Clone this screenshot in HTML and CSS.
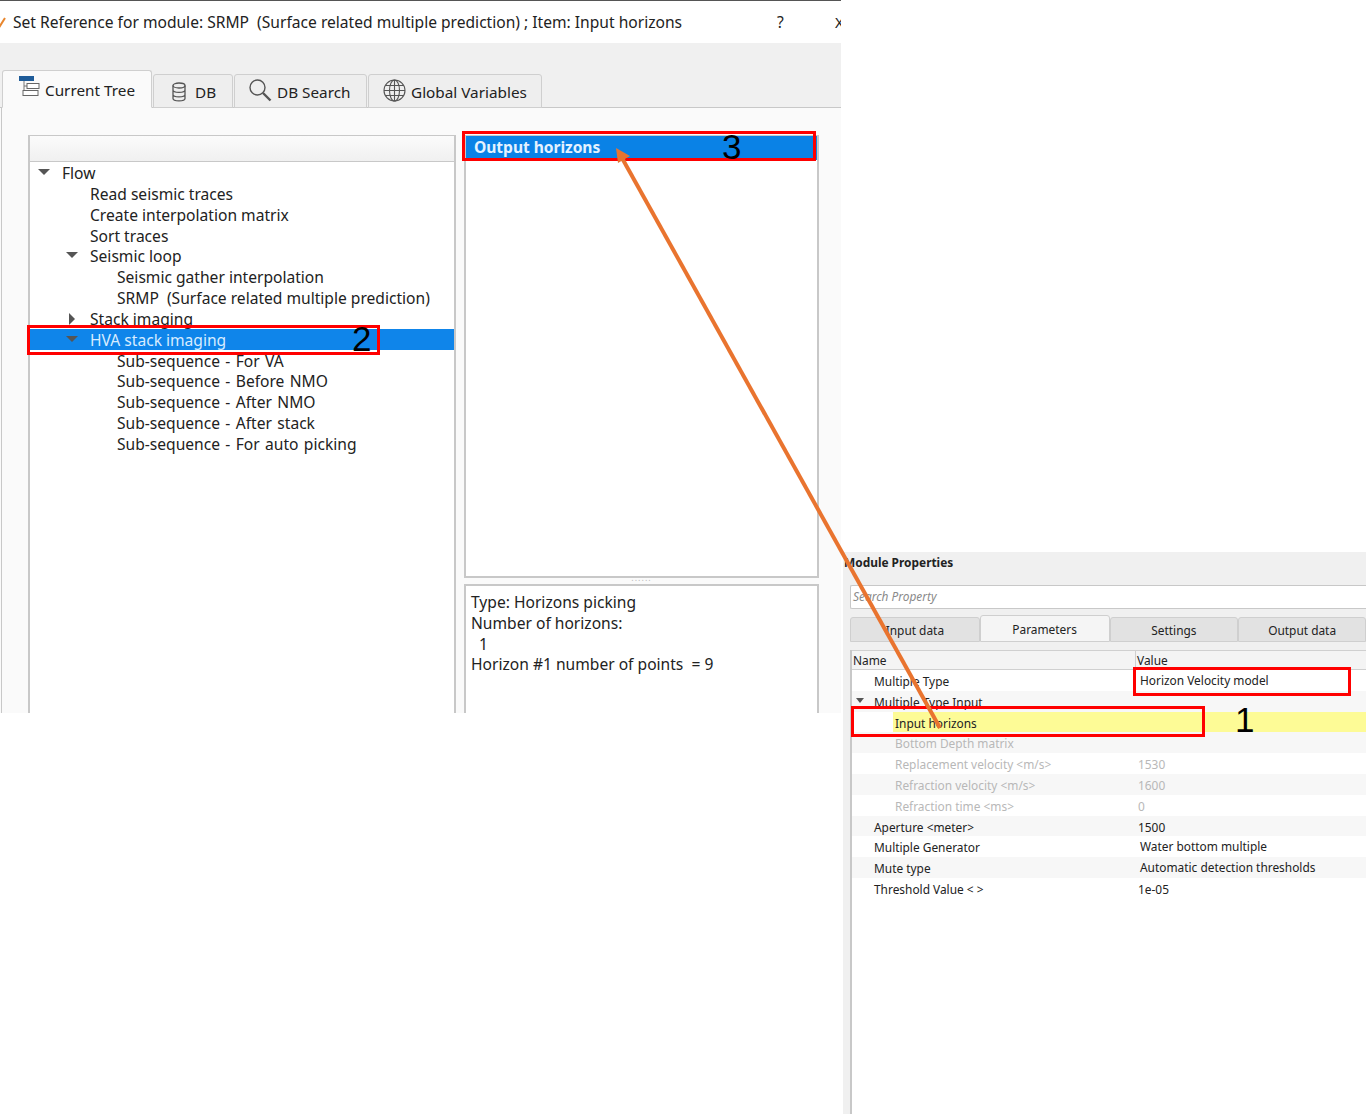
FILE: index.html

```html
<!DOCTYPE html>
<html lang="en">
<head>
  <meta charset="UTF-8" />
  <title>Set Reference for module</title>
  <link rel="stylesheet" href="styles.css">
</head>
<body>
  <!-- left window: set reference dialog -->
  <div class="dialog">
    <div class="titlebar">
      <svg class="title-icon" width="8" height="12" viewBox="0 0 8 12"><path d="M-3 6 L0 10 L5 2" fill="none" stroke="#e8862e" stroke-width="2"/></svg>
      <span class="title-text">Set Reference for module: SRMP&nbsp; (Surface related multiple prediction) ; Item: Input horizons</span>
      <span class="title-help">?</span>
      <span class="title-close">X</span>
    </div>
    <div class="tabs">
      <div class="tab tab-active tab-tree">
        <svg width="24" height="24" viewBox="0 0 24 24"><rect x="1" y="1" width="15" height="5" fill="#1f5c99"/><path d="M6 6 v15 M6 11 h3 M6 16 h3" stroke="#777" fill="none"/><rect x="9" y="8.5" width="12" height="5" fill="#fff" stroke="#666"/><rect x="5" y="15.5" width="15" height="5" fill="#fff" stroke="#666"/></svg>
        Current Tree
      </div>
      <div class="tab tab-db">
        <svg width="16" height="20" viewBox="0 0 16 20" fill="none" stroke="#555" stroke-width="1.3"><ellipse cx="8" cy="3.5" rx="6" ry="2.5"/><path d="M2 3.5 v13 c0 3.2 12 3.2 12 0 v-13 M2 8 c0 3.2 12 3.2 12 0 M2 12.5 c0 3.2 12 3.2 12 0"/></svg>
        DB
      </div>
      <div class="tab tab-search">
        <svg width="24" height="24" viewBox="0 0 24 24" fill="none" stroke="#555"><circle cx="9.5" cy="9.5" r="7.5" stroke-width="1.4"/><path d="M15 15 L22.5 22.5" stroke-width="2.4"/></svg>
        DB Search
      </div>
      <div class="tab tab-global">
        <svg width="23" height="23" viewBox="0 0 23 23" fill="none" stroke="#555" stroke-width="1.1"><circle cx="11.5" cy="11.5" r="10.5"/><ellipse cx="11.5" cy="11.5" rx="5" ry="10.5"/><path d="M11.5 1 v21 M1 11.5 h21 M2.5 6.5 h18 M2.5 16.5 h18"/></svg>
        Global Variables
      </div>
    </div>
    <div class="tab-body">
      <div class="tree-panel">
        <div class="tree-head"></div>
        <div class="row lvl0"><i class="arrow-down"></i>Flow</div>
        <div class="row lvl1">Read seismic traces</div>
        <div class="row lvl1">Create interpolation matrix</div>
        <div class="row lvl1">Sort traces</div>
        <div class="row lvl1"><i class="arrow-down"></i>Seismic loop</div>
        <div class="row lvl2">Seismic gather interpolation</div>
        <div class="row lvl2">SRMP&nbsp; (Surface related multiple prediction)</div>
        <div class="row lvl1"><i class="arrow-right"></i>Stack imaging</div>
        <div class="row lvl1 row-selected"><i class="arrow-down"></i>HVA stack imaging</div>
        <div class="row lvl2 seq">Sub-sequence - For VA</div>
        <div class="row lvl2 seq">Sub-sequence - Before NMO</div>
        <div class="row lvl2 seq">Sub-sequence - After NMO</div>
        <div class="row lvl2 seq">Sub-sequence - After stack</div>
        <div class="row lvl2 seq">Sub-sequence - For auto picking</div>
      </div>
      <div class="side">
        <div class="list-panel">
          <div class="list-selected">Output horizons</div>
        </div>
        <div class="splitter">......</div>
        <div class="info-panel">
          <div>Type: Horizons picking</div>
          <div>Number of horizons:</div>
          <div>&nbsp; 1</div>
          <div>Horizon #1 number of points&nbsp; = 9</div>
        </div>
      </div>
    </div>
  </div>

  <!-- right window: module properties -->
  <div class="props">
    <div class="props-title">Module Properties</div>
    <div class="props-search">Search Property</div>
    <div class="props-tabs">
      <div class="ptab ptab-input">Input data</div>
      <div class="ptab ptab-active">Parameters</div>
      <div class="ptab ptab-settings">Settings</div>
      <div class="ptab ptab-output">Output data</div>
    </div>
    <div class="grid">
      <div class="grid-head"><span class="col-name">Name</span><span class="col-value">Value</span></div>
      <div class="prow"><span class="col-name n1">Multiple Type</span><span class="col-value v-text">Horizon Velocity model</span></div>
      <div class="prow alt"><span class="col-name n1"><i class="arrow-down small"></i>Multiple Type Input</span><span class="col-value"></span></div>
      <div class="prow"><span class="col-name n2 hl">Input horizons</span><span class="col-value hl"></span></div>
      <div class="prow alt off"><span class="col-name n2">Bottom Depth matrix</span><span class="col-value"></span></div>
      <div class="prow off"><span class="col-name n2">Replacement velocity &lt;m/s&gt;</span><span class="col-value">1530</span></div>
      <div class="prow alt off"><span class="col-name n2">Refraction velocity &lt;m/s&gt;</span><span class="col-value">1600</span></div>
      <div class="prow off"><span class="col-name n2">Refraction time &lt;ms&gt;</span><span class="col-value">0</span></div>
      <div class="prow alt"><span class="col-name n1">Aperture &lt;meter&gt;</span><span class="col-value">1500</span></div>
      <div class="prow"><span class="col-name n1">Multiple Generator</span><span class="col-value v-text">Water bottom multiple</span></div>
      <div class="prow alt"><span class="col-name n1">Mute type</span><span class="col-value v-text">Automatic detection thresholds</span></div>
      <div class="prow"><span class="col-name n1">Threshold Value &lt; &gt;</span><span class="col-value">1e-05</span></div>
    </div>
  </div>

  <!-- annotations on top of both windows -->
  <div class="mark mark-1"></div>
  <div class="mark mark-2"></div>
  <div class="mark mark-3"></div>
  <div class="mark mark-4"></div>
  <span class="num num-1">1</span>
  <span class="num num-2">2</span>
  <span class="num num-3">3</span>
  <svg class="arrow" width="1366" height="1114" viewBox="0 0 1366 1114">
    <path d="M940 728 L622 158" stroke="#e9742f" stroke-width="4" fill="none"/>
    <path d="M616 148 L630 156 L618 163 Z" fill="#e9742f"/>
  </svg>
</body>
</html>
```

FILE: styles.css

```css
body {
  margin: 0;
  width: 1366px;
  height: 1114px;
  position: relative;
  overflow: hidden;
  background: #fff;
  font-family: 'Noto Sans', sans-serif;
  color: #222;
}

/* left dialog */
.dialog {
  position: absolute;
  left: 0;
  top: 0;
  width: 841px;
  height: 713px;
  overflow: hidden;
  background: #fafafa;
  display: flex;
  flex-direction: column;
  font-size: 15.6px;
}
.titlebar {
  height: 42px;
  flex: none;
  background: #fff;
  border-top: 1px solid #555;
  display: flex;
  align-items: center;
  font-size: 15.6px;
}
.title-icon {
  flex: none;
  width: 8px;
  margin-right: 5px;
}
.title-text {
  white-space: nowrap;
  width: 764px;
  flex: none;
}
.title-help {
  width: 58px;
  flex: none;
}
.title-close {
  flex: none;
  font-size: 15px;
}
.tabs {
  height: 65px;
  flex: none;
  background: #f0f0f0;
  display: flex;
  align-items: flex-end;
  padding-left: 2px;
  box-sizing: border-box;
  border-bottom: 1px solid #c8c8c8;
  font-size: 15.3px;
}
.tab {
  box-sizing: border-box;
  height: 34px;
  margin-bottom: -1px;
  padding-top: 2px;
  background: #eeeeee;
  border: 1px solid #cfcfcf;
  border-radius: 3px 3px 0 0;
  margin-right: 1px;
  display: flex;
  align-items: center;
  white-space: nowrap;
}
.tab-active {
  height: 38px;
  background: #fafafa;
  border-bottom: 1px solid #fafafa;
}
.tab-tree { width: 150px; padding-left: 15px; gap: 3px; }
.tab-tree svg { margin-top: -6px; }
.tab-db { width: 80px; padding-left: 17px; gap: 8px; }
.tab-search { width: 133px; padding-left: 13px; gap: 5px; }
.tab-search svg { margin-top: -4px; }
.tab-global { width: 174px; padding-left: 14px; gap: 5px; }
.tab-global svg { margin-top: -3px; }

.tab-body {
  flex: 1;
  display: flex;
  padding: 27px 0 0 28px;
  gap: 8px;
  position: relative;
}
.tab-body::before {
  content: "";
  position: absolute;
  left: 1px;
  top: 0;
  bottom: 0;
  border-left: 1px solid #c8c8c8;
}
.tree-panel {
  box-sizing: border-box;
  width: 428px;
  height: 600px;
  background: #fff;
  border: 2px solid #c8c8c8;
  border-width: 1px 2px 0 2px;
}
.tree-head {
  height: 25px;
  background: linear-gradient(#fbfbfb, #f0f0f0);
  border-bottom: 1px solid #c8c8c8;
}
.row {
  position: relative;
  height: 20.85px;
  line-height: 22px;
  white-space: nowrap;
}
.lvl0 { padding-left: 32px; }
.lvl1 { padding-left: 60px; }
.lvl2 { padding-left: 87px; }
.seq { word-spacing: 1.3px; }
.row-selected {
  background: #0f85ea;
  color: #d8ecff;
}
.arrow-down, .arrow-right {
  position: absolute;
  width: 0;
  height: 0;
}
.arrow-down {
  margin-left: -24px;
  margin-top: 7px;
  border-left: 6px solid transparent;
  border-right: 6px solid transparent;
  border-top: 6px solid #555;
}
.arrow-down.small {
  margin-left: -18px;
  margin-top: 7px;
  border-width: 5px 4px 0 4px;
}
.arrow-right {
  margin-left: -21px;
  margin-top: 5px;
  border-top: 6px solid transparent;
  border-bottom: 6px solid transparent;
  border-left: 6px solid #555;
}
.side {
  width: 355px;
  display: flex;
  flex-direction: column;
}
.list-panel {
  box-sizing: border-box;
  height: 443px;
  flex: none;
  background: #fff;
  border: 2px solid #c8c8c8;
  border-top-width: 1px;
}
.list-selected {
  height: 24px;
  line-height: 22px;
  background: #0a82e6;
  color: #e4f2ff;
  font-weight: bold;
  letter-spacing: -0.05px;
  padding-left: 8px;
}
.splitter {
  height: 6px;
  flex: none;
  text-align: center;
  font-size: 9px;
  line-height: 0;
  color: #bbb;
  letter-spacing: 1px;
}
.info-panel {
  box-sizing: border-box;
  flex: none;
  height: 200px;
  background: #fff;
  border: 2px solid #c8c8c8;
  padding: 6px 5px;
  line-height: 20.8px;
}

/* right window */
.props {
  position: absolute;
  left: 843px;
  top: 552px;
  width: 523px;
  height: 562px;
  background: #f0f0f0;
  display: flex;
  flex-direction: column;
  font-size: 11.9px;
  overflow: hidden;
}
.props-title {
  height: 22px;
  line-height: 21px;
  padding-left: 1px;
  font-weight: bold;
  white-space: nowrap;
  flex: none;
}
.props-search {
  box-sizing: border-box;
  height: 24px;
  margin: 11px 0 0 7px;
  line-height: 20px;
  padding-left: 2px;
  background: #fff;
  border: 1px solid #c8c8c8;
  border-right: 0;
  border-radius: 2px 0 0 2px;
  font-style: italic;
  color: #8a8a8a;
  flex: none;
}
.props-tabs {
  display: flex;
  align-items: flex-end;
  height: 30px;
  margin: 3px 0 0 7px;
  flex: none;
}
.ptab {
  box-sizing: border-box;
  height: 25px;
  line-height: 25px;
  text-align: center;
  background: #e2e2e2;
  border: 1px solid #cfcfcf;
  border-radius: 3px 3px 0 0;
  white-space: nowrap;
}
.ptab-input { width: 130px; }
.ptab-active {
  width: 130px;
  height: 27px;
  line-height: 26px;
  background: #f5f5f5;
}
.ptab-settings { width: 129px; }
.ptab-output { width: 128px; }
.grid {
  flex: 1;
  margin: 8px 0 0 7px;
  background: #fff;
  border-left: 2px solid #c8c8c8;
}
.grid-head, .prow {
  display: flex;
  white-space: nowrap;
}
.grid-head {
  height: 18px;
  line-height: 18px;
  background: #f4f4f4;
  border-top: 1px solid #d0d0d0;
  border-bottom: 1px solid #d0d0d0;
}
.col-name {
  width: 283px;
  flex: none;
  box-sizing: border-box;
  padding-left: 1px;
  position: relative;
}
.col-value {
  flex: 1;
  padding-left: 3px;
}
.grid-head .col-value {
  border-left: 1px solid #d0d0d0;
  padding-left: 1px;
}
.prow {
  height: 20.8px;
  line-height: 23.5px;
}
.alt { background: #f7f7f7; }
.n1 { padding-left: 22px; }
.n2 { padding-left: 43px; }
.v-text { padding-left: 5px; margin-top: -1px; }
.off { color: #b8b8b8; }
.hl {
  background: #fdfb96;
}
.col-name.hl {
  margin-left: 41px;
  padding-left: 2px;
  width: 242px;
}

/* annotations */
.mark {
  position: absolute;
  box-sizing: border-box;
  border: 3px solid #f00;
}
.mark-1 { left: 851px; top: 706px; width: 354px; height: 31px; }
.mark-2 { left: 27px; top: 325px; width: 353px; height: 30px; }
.mark-3 { left: 462px; top: 131px; width: 354px; height: 30px; }
.mark-4 { left: 1133px; top: 667px; width: 218px; height: 29px; }
.num {
  position: absolute;
  font-family: 'Liberation Sans', sans-serif;
  font-size: 35px;
  line-height: 40px;
  color: #000;
}
.num-1 { left: 1235px; top: 700px; }
.num-2 { left: 352px; top: 319px; }
.num-3 { left: 722px; top: 127px; }
.arrow {
  position: absolute;
  left: 0;
  top: 0;
  pointer-events: none;
}
```
